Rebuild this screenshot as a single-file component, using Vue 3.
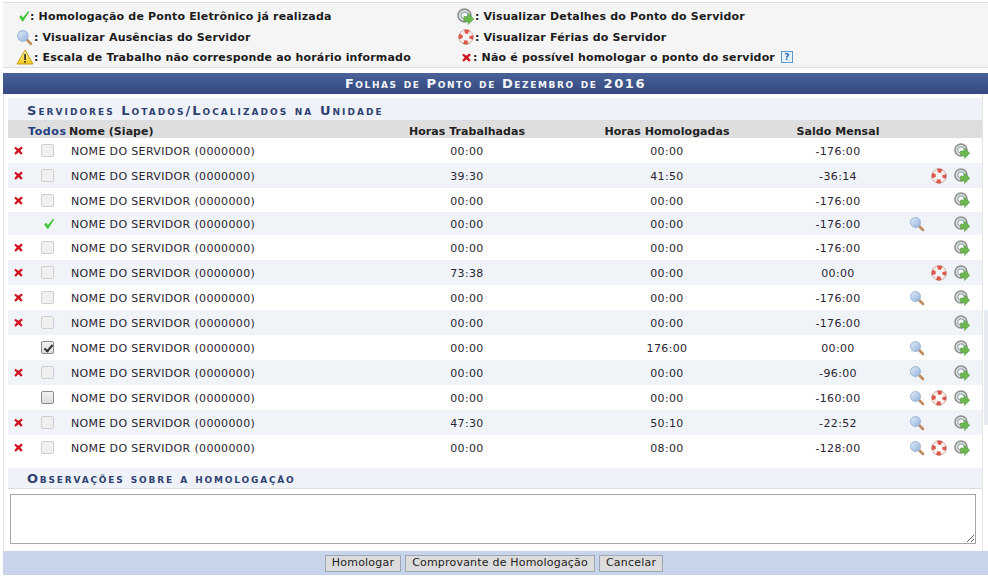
<template>
  <div class="page">
    <svg class="defs" width="0" height="0">
      <defs>
        <linearGradient id="glass" x1="0" y1="0" x2="1" y2="1">
          <stop offset="0" stop-color="#e4eefa" />
          <stop offset="1" stop-color="#8fb0dc" />
        </linearGradient>
        <linearGradient id="warnFill" x1="0" y1="0" x2="0" y2="1">
          <stop offset="0" stop-color="#fff6a0" />
          <stop offset="1" stop-color="#f2c81e" />
        </linearGradient>
      </defs>
      <symbol id="i-check" viewBox="0 0 16 16">
        <path d="M1.5 9 L4.5 7 L6.5 10 L13.5 1.5 L15 2.5 L7 15 L5.5 15 Z" fill="#45c63c" />
      </symbol>
      <symbol id="i-glass" viewBox="0 0 16 16">
        <path d="M9.5 9.5 L14 14" stroke="#c08a5c" stroke-width="2.6" stroke-linecap="round" />
        <circle cx="6.5" cy="6.5" r="5" fill="url(#glass)" stroke="#9db7d8" />
      </symbol>
      <symbol id="i-warn" viewBox="0 0 18 16">
        <path d="M9 1 L17 15 L1 15 Z" fill="url(#warnFill)" stroke="#c9a21a" stroke-linejoin="round" />
        <rect x="8.2" y="5" width="1.7" height="6" fill="#333" />
        <rect x="8.2" y="12" width="1.7" height="1.7" fill="#333" />
      </symbol>
      <symbol id="i-go" viewBox="0 0 16 16">
        <circle cx="7" cy="7" r="6" fill="#e0e4e0" stroke="#8f8f8f" stroke-width="1.6" />
        <circle cx="7" cy="7" r="3.2" fill="#f8fbfb" stroke="#98aab2" stroke-width="1.2" />
        <path d="M6.5 8 H10.5 V5 L15.8 10.3 L10.5 15.6 V12.6 H6.5 Z" fill="#6cb84f" stroke="#4c9a3e" stroke-width=".5" />
      </symbol>
      <symbol id="i-buoy" viewBox="0 0 16 16">
        <circle cx="8" cy="8" r="5.4" fill="none" stroke="#f5ebe6" stroke-width="4" />
        <circle cx="8" cy="8" r="5.4" fill="none" stroke="#e0564a" stroke-width="4" stroke-dasharray="4.2 4.28" stroke-dashoffset="2.1" />
        <circle cx="8" cy="8" r="7.3" fill="none" stroke="#a8726a" stroke-width=".5" />
      </symbol>
      <symbol id="i-x" viewBox="0 0 10 10">
        <path d="M1.5 .8 L5 3 L8.2 .6 L9.8 2.2 L7 5 L9.6 8 L7.8 9.6 L5 7 L2 9.6 L.3 8 L3 5 L.3 2.4 Z" fill="#cf1420" />
      </symbol>
    </svg>

    <section class="legend">
      <div class="legend-col left">
        <div class="legend-item item-a"><svg class="ic ic-check"><use href="#i-check" /></svg>: Homologação de Ponto Eletrônico já realizada</div>
        <div class="legend-item item-b"><svg class="ic ic-glass"><use href="#i-glass" /></svg>: Visualizar Ausências do Servidor</div>
        <div class="legend-item item-c"><svg class="ic ic-warn"><use href="#i-warn" /></svg>: Escala de Trabalho não corresponde ao horário informado</div>
      </div>
      <div class="legend-col right">
        <div class="legend-item item-a"><svg class="ic ic-go"><use href="#i-go" /></svg>: Visualizar Detalhes do Ponto do Servidor</div>
        <div class="legend-item item-b"><svg class="ic ic-buoy"><use href="#i-buoy" /></svg>: Visualizar Férias do Servidor</div>
        <div class="legend-item item-c">
          <svg class="ic ic-x"><use href="#i-x" /></svg>: Não é possível homologar o ponto do servidor
          <span class="help">?</span>
        </div>
      </div>
    </section>

    <section class="panel">
      <h1 class="title">Folhas de Ponto de Dezembro de 2016</h1>
      <div class="body">
        <h2 class="subtitle">Servidores Lotados/Localizados na Unidade</h2>
        <div class="row head">
          <span class="todos">Todos</span>
          <span class="name">Nome (Siape)</span>
          <span class="num">Horas Trabalhadas</span>
          <span class="num">Horas Homologadas</span>
          <span class="num">Saldo Mensal</span>
        </div>
        <div
          v-for="(s, i) in servidores"
          :key="i"
          class="row"
          :class="{ odd: i % 2 === 1 }"
          :style="{ height: s.h + 'px' }"
        >
          <span class="mark"><svg v-if="s.x" class="ic-x-row"><use href="#i-x" /></svg></span>
          <span class="box">
            <svg v-if="s.ok" class="ic-ok"><use href="#i-check" /></svg>
            <input v-else type="checkbox" :class="{ active: s.active }" :checked="s.checked" :disabled="!s.active" />
          </span>
          <span class="name">NOME DO SERVIDOR (0000000)</span>
          <span class="num">{{ s.trab }}</span>
          <span class="num">{{ s.homol }}</span>
          <span class="num">{{ s.saldo }}</span>
          <span class="actions">
            <svg class="act glass" :class="{ off: !s.glass }"><use href="#i-glass" /></svg>
            <svg class="act buoy" :class="{ off: !s.buoy }"><use href="#i-buoy" /></svg>
            <svg class="act go"><use href="#i-go" /></svg>
          </span>
        </div>

        <h2 class="subtitle obs">Observações sobre a homologação</h2>
        <div class="obs-wrap"><textarea class="obs-input"></textarea></div>
      </div>
      <div class="buttons">
        <button>Homologar</button>
        <button>Comprovante de Homologação</button>
        <button>Cancelar</button>
      </div>
    </section>
    <div class="edge"></div>
  </div>
</template>

<script setup>
const servidores = [
  { h: 25, x: true, trab: '00:00', homol: '00:00', saldo: '-176:00' },
  { h: 25, x: true, trab: '39:30', homol: '41:50', saldo: '-36:14', buoy: true },
  { h: 24, x: true, trab: '00:00', homol: '00:00', saldo: '-176:00' },
  { h: 23, ok: true, trab: '00:00', homol: '00:00', saldo: '-176:00', glass: true },
  { h: 25, x: true, trab: '00:00', homol: '00:00', saldo: '-176:00' },
  { h: 25, x: true, trab: '73:38', homol: '00:00', saldo: '00:00', buoy: true },
  { h: 25, x: true, trab: '00:00', homol: '00:00', saldo: '-176:00', glass: true },
  { h: 25, x: true, trab: '00:00', homol: '00:00', saldo: '-176:00' },
  { h: 25, active: true, checked: true, trab: '00:00', homol: '176:00', saldo: '00:00', glass: true },
  { h: 25, x: true, trab: '00:00', homol: '00:00', saldo: '-96:00', glass: true },
  { h: 25, active: true, trab: '00:00', homol: '00:00', saldo: '-160:00', glass: true, buoy: true },
  { h: 25, x: true, trab: '47:30', homol: '50:10', saldo: '-22:52', glass: true },
  { h: 25, x: true, trab: '00:00', homol: '08:00', saldo: '-128:00', glass: true, buoy: true }
]
</script>

<style>
html, body {
  margin: 0;
  background: #fff;
  overflow: hidden;
}
</style>

<style scoped>
.page {
  width: 988px;
  height: 578px;
  position: relative;
  overflow: hidden;
  padding-top: 2px;
  box-sizing: border-box;
  font-family: "DejaVu Sans", Verdana, sans-serif;
  font-size: 11px;
  color: #222;
}

.defs {
  position: absolute;
}

.legend {
  height: 64px;
  margin-left: 3px;
  background: #f5f5f5;
  border-top: 1px solid #e0e0e0;
  border-bottom: 1px solid #dcdcdc;
  display: flex;
}

.legend-col.left {
  width: 439px;
  padding-left: 13px;
}

.legend-col.right {
  padding-left: 2px;
}

.legend-item {
  display: flex;
  align-items: center;
  white-space: pre;
  font-weight: 600;
  letter-spacing: 0.17px;
  color: #1c1c1c;
  height: 20px;
}

.item-a {
  margin-top: 3px;
}

.item-b {
  margin-top: 1px;
}

.ic {
  flex: none;
}

.ic-check {
  width: 12px;
  height: 14px;
  margin-left: 2px;
}

.ic-glass {
  width: 17px;
  height: 17px;
  margin-right: 1px;
}

.ic-warn {
  width: 18px;
  height: 16px;
}

.ic-go {
  width: 17px;
  height: 17px;
  margin-right: 1px;
}

.ic-buoy {
  width: 16px;
  height: 16px;
  margin-left: 1px;
  margin-right: 1px;
}

.ic-x {
  width: 9px;
  height: 9px;
  margin-left: 5px;
  margin-right: 2px;
}

.help {
  margin-left: 2px;
  width: 10px;
  height: 10px;
  border: 1px solid #5b9bd5;
  background: #e8f2fb;
  color: #2a6fb5;
  font-size: 9px;
  line-height: 10px;
  text-align: center;
}

.panel {
  margin: 5px 0 0 3px;
}

.title {
  margin: 0;
  height: 21px;
  line-height: 22px;
  text-align: center;
  background: linear-gradient(#4a6298, #33497f);
  color: #f4f6fa;
  font-size: 13px;
  font-weight: 700;
  font-variant: small-caps;
  letter-spacing: 1.58px;
}

.body {
  margin-right: 5px;
  padding: 4px 0 7px 4px;
  border-left: 1px solid #e4e4e4;
  border-right: 1px solid #e4e4e4;
}

.subtitle {
  margin: 0;
  height: 22px;
  line-height: 25px;
  padding-left: 19px;
  background: #eff3f9;
  border-bottom: 1px solid #d8dde6;
  color: #2f4272;
  font-size: 13px;
  font-weight: 700;
  font-variant: small-caps;
  letter-spacing: 2.03px;
}

.row {
  display: grid;
  grid-template-columns: 20px 43px 298px 196px 204px 138px 1fr;
  align-items: center;
  height: 25px;
  box-sizing: border-box;
  color: #2a2430;
  letter-spacing: 0.35px;
}

.row.odd {
  background: #f0f4f9;
}

.row.head {
  height: 17px;
  padding-top: 1px;
  background: #dedede;
  font-weight: 600;
  color: #222;
  letter-spacing: 0.05px;
}

.todos {
  grid-column: 1 / span 2;
  padding-left: 20px;
  padding-top: 2px;
  color: #1f3f7f;
  font-weight: 700;
  letter-spacing: 0.6px;
}

.mark {
  display: flex;
  justify-content: center;
}

.ic-x-row {
  width: 9px;
  height: 9px;
}

.box {
  display: flex;
  justify-content: center;
  padding-right: 4px;
}

.ic-ok {
  width: 12px;
  height: 13px;
  margin-left: 2px;
}

input[type="checkbox"] {
  appearance: none;
  width: 13px;
  height: 13px;
  margin: 0;
  border: 1px solid #cfcfcf;
  border-radius: 2px;
  background: #f0f0f0;
  position: relative;
}

input[type="checkbox"].active {
  border-color: #8c8c8c;
  background: linear-gradient(#f2f2f2, #dcdcdc);
}

input[type="checkbox"]:checked::after {
  content: "";
  position: absolute;
  left: 3.5px;
  top: 1px;
  width: 3px;
  height: 7px;
  border: solid #333;
  border-width: 0 2px 2px 0;
  transform: rotate(40deg);
}

.name {
  padding-top: 2px;
  white-space: nowrap;
}

.head .name {
  margin-left: -2px;
}

.num {
  padding-top: 2px;
  text-align: center;
}

.actions {
  display: flex;
  align-items: center;
  justify-content: flex-end;
  padding-right: 12px;
  gap: 6px;
}

.act {
  width: 16px;
  height: 16px;
  flex: none;
}

.act.go {
  margin-left: 1px;
}

.act.off {
  visibility: hidden;
}

.subtitle.obs {
  margin-top: 8px;
  height: 20px;
  line-height: 22px;
  letter-spacing: 1.8px;
}

.obs-wrap {
  padding: 5px 6px 0 2px;
}

.obs-input {
  display: block;
  width: 100%;
  height: 50px;
  box-sizing: border-box;
  border: 1px solid #a6a6a6;
  outline: none;
  background: #fff;
  margin: 0;
}

.buttons {
  height: 24px;
  background: #c8d4ea;
  display: flex;
  justify-content: center;
  align-items: center;
  gap: 4px;
  padding-right: 3px;
}

.buttons button {
  height: 17px;
  padding: 0 6px;
  font-family: "DejaVu Sans", Verdana, sans-serif;
  font-size: 11px;
  letter-spacing: 0.2px;
  color: #222;
  background: #dcdcdc;
  border: 1px solid #9fa6b5;
  border-radius: 0;
  line-height: 14px;
}

.edge {
  position: absolute;
  right: 0;
  top: 310px;
  width: 4px;
  height: 115px;
  background: #e6ebf3;
}
</style>
